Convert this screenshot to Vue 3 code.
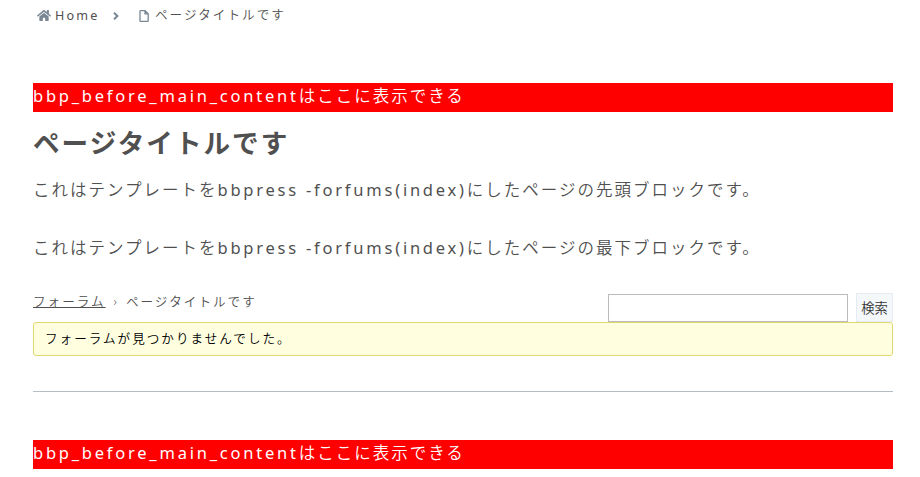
<template>
  <div class="page">
    <nav class="breadcrumb">
      <svg class="home-icon" viewBox="0 0 576 512">
        <path d="M280.4 148.3 96 300.1V464a16 16 0 0 0 16 16h112a16 16 0 0 0 16-16v-96a16 16 0 0 1 16-16h64a16 16 0 0 1 16 16v96a16 16 0 0 0 16 16h112a16 16 0 0 0 16-16V300L295.7 148.3a12.2 12.2 0 0 0-15.3 0zM571.6 251.5 488 182.6V44a12 12 0 0 0-12-12h-56a12 12 0 0 0-12 12v72.6L318.5 43a48 48 0 0 0-61 0L4.3 251.5a12 12 0 0 0-1.6 16.9l25.5 31a12 12 0 0 0 16.9 1.6L280.4 107.2a12.2 12.2 0 0 1 15.3 0L530.9 301a12 12 0 0 0 16.9-1.6l25.5-31a12 12 0 0 0-1.7-16.9z" />
      </svg>
      <span class="home">Home</span>
      <svg class="arrow-icon" viewBox="0 0 6 8">
        <path d="M1 .8 4.4 4 1 7.2" />
      </svg>
      <svg class="file-icon" viewBox="0 0 10 12">
        <path d="M1.6.7h4.5l3.1 3v7a.6.6 0 0 1-.6.6h-7a.6.6 0 0 1-.6-.6V1.3a.6.6 0 0 1 .7-.6zM6 .9v3h3" />
      </svg>
      <span class="current">{{ title }}</span>
    </nav>

    <div class="hook"><span class="latin">bbp_before_main_content</span>はここに表示できる</div>

    <h1 class="title">{{ title }}</h1>

    <p v-for="place in blocks" :key="place" class="block">
      これはテンプレートを<span class="latin">bbpress -forfums(index)</span>にしたページの{{ place }}ブロックです。
    </p>

    <div class="forum-bar">
      <div class="forum-path">
        <a class="forum-link">フォーラム</a><span class="sep">›</span><span>{{ title }}</span>
      </div>
      <form class="search" @submit.prevent>
        <input v-model="keyword" class="search-input" type="text">
        <button class="search-button" type="submit">検索</button>
      </form>
    </div>

    <div class="notice">フォーラムが見つかりませんでした。</div>

    <hr class="line">

    <div class="hook"><span class="latin">bbp_before_main_content</span>はここに表示できる</div>
  </div>
</template>

<script setup>
import { ref } from 'vue';

const title = 'ページタイトルです';
const blocks = ['先頭', '最下'];
const keyword = ref('');
</script>

<style>
body {
  background: #fff;
}
</style>

<style scoped>
.page {
  box-sizing: border-box;
  height: 477px;
  overflow: hidden;
  padding: 0 27px 0 33px;
  color: #505050;
  font-family: "Noto Sans", "Noto Sans CJK JP", sans-serif;
  font-size: 16.5px;
  font-weight: 350;
  letter-spacing: 2px;
  white-space: nowrap;
}

.breadcrumb {
  display: flex;
  align-items: center;
  height: 31px;
  margin-bottom: 52px;
  padding-left: 4px;
  font-size: 12.6px;
}

.home-icon {
  width: 14px;
  height: 13px;
  fill: #788793;
}

.home {
  width: 58px;
  margin-left: 4px;
  font-weight: 400;
  letter-spacing: 2.2px;
}

.arrow-icon {
  width: 6px;
  height: 8px;
  fill: none;
  stroke: #788793;
  stroke-width: 2;
}

.file-icon {
  width: 10px;
  height: 12px;
  margin: 0 6px 0 20px;
  fill: none;
  stroke: #788793;
  stroke-width: 1.3;
}

.current {
  line-height: 16px;
  margin-top: -2px;
}

.hook {
  height: 29px;
  background: #f00;
  color: #fff;
  line-height: 26px;
}

.latin {
  font-weight: 400;
  letter-spacing: 2.77px;
}

.title {
  height: 63px;
  margin: 0;
  font-size: 26.6px;
  font-weight: 700;
  line-height: 63px;
}

.block {
  height: 29px;
  margin: 0 0 29px;
  line-height: 29px;
}

.forum-bar {
  display: flex;
  justify-content: space-between;
  height: 31px;
}

.forum-path {
  font-size: 12.6px;
  line-height: 22px;
}

.forum-link {
  text-decoration: underline;
}

.sep {
  margin: 0 7px 0 8px;
}

.search {
  display: flex;
  align-items: flex-end;
  gap: 8px;
}

.search-input {
  box-sizing: border-box;
  width: 240px;
  height: 28px;
  padding: 0 5px;
  border: 1px solid #bbb;
  outline: none;
}

.search-button {
  box-sizing: border-box;
  width: 37px;
  height: 29px;
  padding: 0;
  border: 1px solid #e5ebf0;
  background: #f5f8fa;
  color: #333;
  font-family: "Noto Sans CJK JP", sans-serif;
  font-size: 13.3px;
  font-weight: 350;
}

.notice {
  box-sizing: border-box;
  height: 34px;
  padding-left: 11px;
  border: 1px solid #e0d774;
  border-radius: 3px;
  background: #ffffe0;
  color: #000;
  font-size: 12.6px;
  line-height: 32px;
}

.line {
  height: 1px;
  margin: 35px 0 48px;
  border: 0;
  background: #b4bec7;
}
</style>
